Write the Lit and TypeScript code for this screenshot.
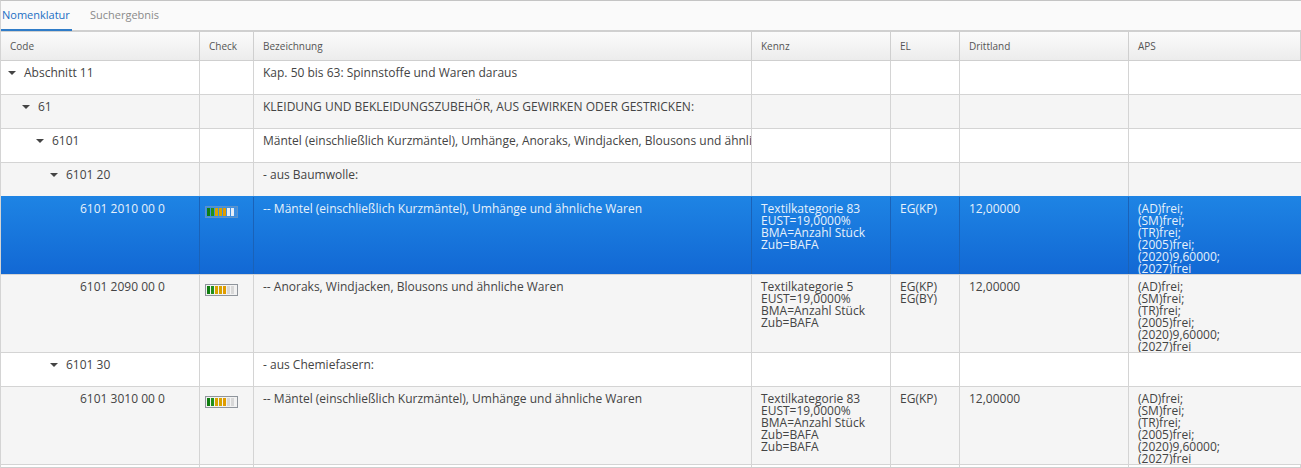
import { LitElement, html, css, nothing } from "lit";
import { customElement } from "lit/decorators.js";

interface Row {
  level: number; code: string; leaf?: boolean; check?: boolean; text: string;
  kennz?: string[]; el?: string[]; dritt?: string; aps?: string[];
  alt?: boolean; sel?: boolean; tall?: boolean;
}
const APS = ["(AD)frei;", "(SM)frei;", "(TR)frei;", "(2005)frei;", "(2020)9,60000;", "(2027)frei"];
const ROWS: Row[] = [
  { level: 0, code: "Abschnitt 11", text: "Kap. 50 bis 63: Spinnstoffe und Waren daraus" },
  { level: 1, code: "61", alt: true, text: "KLEIDUNG UND BEKLEIDUNGSZUBEHÖR, AUS GEWIRKEN ODER GESTRICKEN:" },
  { level: 2, code: "6101", text: "Mäntel (einschließlich Kurzmäntel), Umhänge, Anoraks, Windjacken, Blousons und ähnliche Waren" },
  { level: 3, code: "6101 20", alt: true, text: "- aus Baumwolle:" },
  { level: 4, code: "6101 2010 00 0", leaf: true, check: true, sel: true, tall: true, text: "-- Mäntel (einschließlich Kurzmäntel), Umhänge und ähnliche Waren",
    kennz: ["Textilkategorie 83", "EUST=19,0000%", "BMA=Anzahl Stück", "Zub=BAFA"], el: ["EG(KP)"], dritt: "12,00000", aps: APS },
  { level: 4, code: "6101 2090 00 0", leaf: true, check: true, alt: true, tall: true, text: "-- Anoraks, Windjacken, Blousons und ähnliche Waren",
    kennz: ["Textilkategorie 5", "EUST=19,0000%", "BMA=Anzahl Stück", "Zub=BAFA"], el: ["EG(KP)", "EG(BY)"], dritt: "12,00000", aps: APS },
  { level: 3, code: "6101 30", text: "- aus Chemiefasern:" },
  { level: 4, code: "6101 3010 00 0", leaf: true, check: true, alt: true, tall: true, text: "-- Mäntel (einschließlich Kurzmäntel), Umhänge und ähnliche Waren",
    kennz: ["Textilkategorie 83", "EUST=19,0000%", "BMA=Anzahl Stück", "Zub=BAFA", "Zub=BAFA"], el: ["EG(KP)"], dritt: "12,00000", aps: APS },
];
const HEAD = ["Code", "Check", "Bezeichnung", "Kennz", "EL", "Drittland", "APS"];

@customElement("app-root")
export class AppRoot extends LitElement {
  static styles = css`
    :host { display: block; width: 1301px; height: 468px; overflow: hidden; background: #fff;
      font-family: "Open Sans", sans-serif; color: #444; box-sizing: border-box; }
    .frame { border-top: 1px solid #c4c4c4; border-left: 1px solid #d4d4d4; height: 467px; overflow: hidden; }
    .tabs { display: flex; height: 29px; background: #fafafa; border-bottom: 2px solid #d0d0d0; box-sizing: content-box; font-size: 11px; }
    .tab { height: 30px; padding: 0 0 0 1px; width: 71px; box-sizing: border-box; line-height: 27px; color: #1a6fc4; border-bottom: 2px solid #2f7cc8; }
    .tab.off { color: #8a8a8a; border-bottom: none; margin-left: 18px; width: auto; padding: 0; }
    .grid { display: grid; grid-template-columns: 199px 54px 498px 139px 69px 169px 172px; }
    .head { height: 29px; background: linear-gradient(#fbfbfb, #ececec); border-bottom: 1px solid #cfcfcf; box-sizing: border-box; font-size: 10px; line-height: 28px; color: #555; }
    .head > div { padding-left: 9px; border-right: 1px solid #cfcfcf; }
    .row { height: 34px; border-bottom: 1px solid #d4d4d4; box-sizing: border-box; font-size: 12px; line-height: 12px; background: #fff; }
    .row.tall { height: 78px; }
    .row.alt { background: #f5f5f5; }
    .row.sel { height: 79px; margin-top: -1px; padding-top: 1px; position: relative; background: linear-gradient(#1e84e4, #1268d4); color: #e6f1fb; }
    .row > div { padding: 6px 0 0 9px; border-right: 1px solid #d4d4d4; overflow: hidden; white-space: nowrap; box-sizing: border-box; }
    .row.sel > div { border-right-color: #1a62b8; }
    .row > div:last-child { border-right: none; }
    .row .desc { line-height: 14px; padding-top: 5px; }
    .row .code { line-height: 14px; padding: 5px 0 0 0; display: flex; align-items: flex-start; }
    .row .dritt { line-height: 14px; padding-top: 5px; }
    .tri { width: 0; height: 0; border: 4px solid transparent; border-top: 4px solid #444; border-bottom: none; margin: 5px 8px 0 0; flex: none; }
    .meter { display: flex; gap: 1px; width: 33px; height: 12px; box-sizing: border-box; border: 1px solid #8f959c; background: #f2f2f2; padding: 1px; margin: 3px 0 0 -4px; }
    .row.sel .meter { border-color: #5d93c9; background: #3f8fe0; }
    .seg { flex: none; width: 3px; }
    .g { background: #0f7d10; }
    .g2 { background: #239019; }
    .y { background: #d9a400; }
    .o { background: #e09c00; }
    .e { background: #d8d8d8; }
    .row.sel .e { background: #e6eef7; }
    .end { height: 3px; border-bottom: 1px solid #cfcfcf; box-sizing: border-box; }
    .end > div { border-right: 1px solid #d4d4d4; }
  `;
  private meter() {
    return html`<div class="meter">
      <i class="seg g"></i><i class="seg g2"></i><i class="seg y"></i><i class="seg y"></i><i class="seg o"></i><i class="seg e"></i><i class="seg e"></i>
    </div>`;
  }
  private lines(l?: string[]) { return (l ?? []).map(t => html`<div>${t}</div>`); }
  render() {
    return html`<div class="frame">
      <div class="tabs"><div class="tab">Nomenklatur</div><div class="tab off">Suchergebnis</div></div>
      <div class="grid head">${HEAD.map(h => html`<div>${h}</div>`)}</div>
      ${ROWS.map(r => html`<div class="grid row ${r.alt ? "alt" : ""} ${r.sel ? "sel" : ""} ${r.tall ? "tall" : ""}">
        <div class="code" style="padding-left:${(r.leaf ? 23 : 7) + r.level * 14}px">${r.leaf ? nothing : html`<span class="tri"></span>`}<span>${r.code}</span></div>
        <div>${r.check ? this.meter() : nothing}</div>
        <div class="desc">${r.text}</div>
        <div class="kennz">${this.lines(r.kennz)}</div>
        <div class="el">${this.lines(r.el)}</div>
        <div class="dritt">${r.dritt ?? ""}</div>
        <div class="aps">${this.lines(r.aps)}</div>
      </div>`)}
      <div class="grid end">${HEAD.map(() => html`<div></div>`)}</div>
    </div>`;
  }
}
